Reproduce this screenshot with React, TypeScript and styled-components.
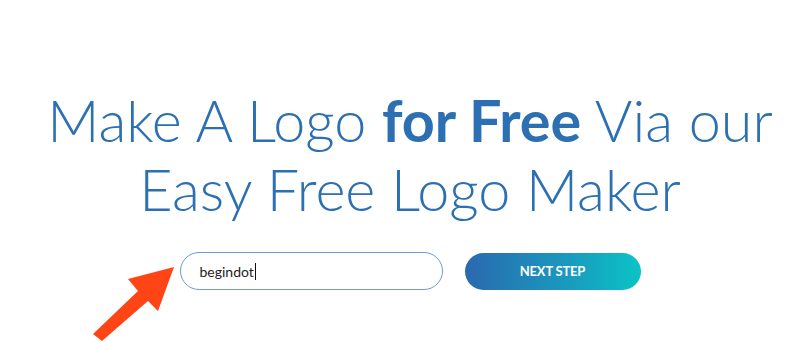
import React from "react";
import styled, { createGlobalStyle } from "styled-components";

const Global = createGlobalStyle`
  html, body { margin: 0; padding: 0; background: #ffffff; }
  body { font-family: "Lato", "Liberation Sans", sans-serif; }
`;

const Page = styled.main`
  width: 800px;
  height: 342px;
  box-sizing: border-box;
  padding: 85px 0 0 20px;
  display: flex;
  flex-direction: column;
  align-items: center;
  overflow: hidden;
`;

const Heading = styled.h1`
  margin: 0;
  font-family: "Lato", "Liberation Sans", sans-serif;
  font-weight: 300;
  font-size: 57.5px;
  line-height: 69px;
  color: #2c6fb3;
  text-align: center;
  white-space: nowrap;
  b { font-weight: 700; }
`;

const Line = styled.span`
  display: block;
`;

const FormRow = styled.form`
  position: relative;
  margin-top: 29px;
  display: flex;
  align-items: center;
  gap: 22px;
`;

const NameInput = styled.div`
  width: 263px;
  height: 38px;
  box-sizing: border-box;
  border: 1px solid #6d9ccf;
  border-radius: 19px;
  padding: 0 19px;
  display: flex;
  align-items: center;
  font-family: "Lato", "Liberation Sans", sans-serif;
  font-size: 14px;
  color: #222;
`;

const Caret = styled.span`
  display: inline-block;
  width: 1px;
  height: 17px;
  background: #111;
  margin-left: 1px;
`;

const NextButton = styled.button`
  width: 176px;
  height: 37px;
  border: none;
  border-radius: 19px;
  background: linear-gradient(90deg, #2a69ae 0%, #1a97bd 55%, #0bc3c6 100%);
  color: #ffffff;
  font-family: "Lato", "Liberation Sans", sans-serif;
  font-weight: 700;
  font-size: 13px;
  letter-spacing: -0.2px;
  cursor: pointer;
`;

const Arrow = styled.svg`
  position: absolute;
  left: -90px;
  top: 13px;
  width: 90px;
  height: 80px;
`;

export default function App() {
  return (
    <>
      <Global />
      <Page>
        <Heading>
          <Line>
            Make A Logo <b>for Free</b> Via our
          </Line>
          <Line>Easy Free Logo Maker</Line>
        </Heading>
        <FormRow onSubmit={(e) => e.preventDefault()}>
          <Arrow viewBox="0 0 90 80">
            <polygon
              points="84,2 68,46 58,36 12,76 3,69 48,26 38,14"
              fill="#ff4516"
            />
          </Arrow>
          <NameInput>
            begindot
            <Caret />
          </NameInput>
          <NextButton type="button">NEXT STEP</NextButton>
        </FormRow>
      </Page>
    </>
  );
}
